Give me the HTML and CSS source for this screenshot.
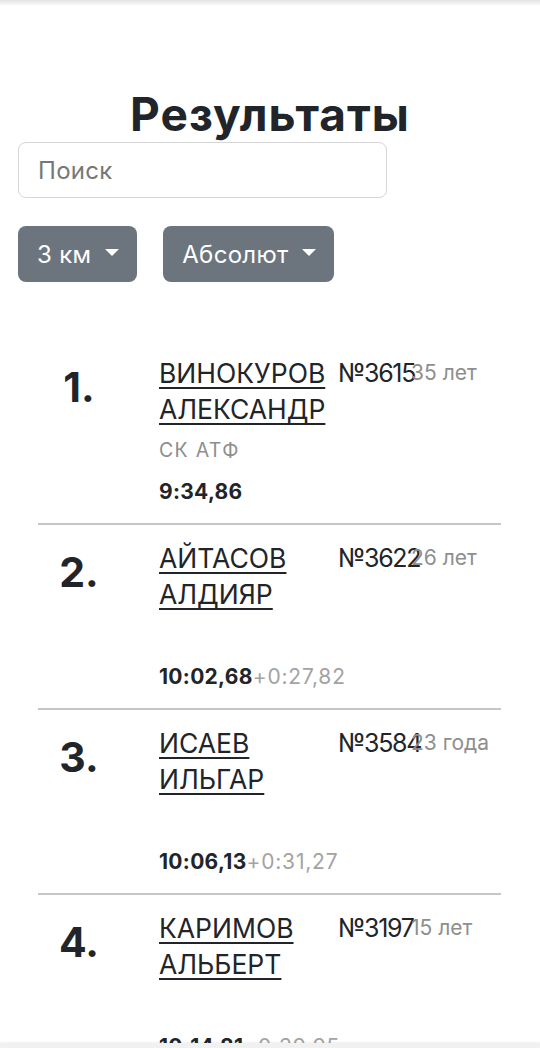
FILE: index.html
```html
<!DOCTYPE html>
<html lang="ru">
<head>
<meta charset="utf-8">
<title>Результаты</title>
<link rel="stylesheet" href="styles.css">
</head>
<body>
<div class="topbar"></div>
<main class="page">
  <h1 class="title">Результаты</h1>
  <input class="search" type="text" placeholder="Поиск">
  <div class="filters">
    <button class="dd" type="button">3 км</button>
    <button class="dd" type="button">Абсолют</button>
  </div>
  <ol class="results">
    <li class="result">
      <div class="place">1.</div>
      <a class="name" href="#">ВИНОКУРОВ АЛЕКСАНДР</a>
      <span class="bib">№3615</span>
      <span class="age">35 лет</span>
      <div class="club">СК АТФ</div>
      <div class="time"><b>9:34,86</b></div>
    </li>
    <li class="result">
      <div class="place">2.</div>
      <a class="name" href="#">АЙТАСОВ АЛДИЯР</a>
      <span class="bib">№3622</span>
      <span class="age">26 лет</span>
      <div class="club"></div>
      <div class="time"><b>10:02,68</b><span class="diff">+0:27,82</span></div>
    </li>
    <li class="result">
      <div class="place">3.</div>
      <a class="name" href="#">ИСАЕВ ИЛЬГАР</a>
      <span class="bib">№3584</span>
      <span class="age">23 года</span>
      <div class="club"></div>
      <div class="time"><b>10:06,13</b><span class="diff">+0:31,27</span></div>
    </li>
    <li class="result">
      <div class="place">4.</div>
      <a class="name" href="#">КАРИМОВ АЛЬБЕРТ</a>
      <span class="bib">№3197</span>
      <span class="age">15 лет</span>
      <div class="club"></div>
      <div class="time"><b>10:14,81</b><span class="diff">+0:39,95</span></div>
    </li>
  </ol>
</main>
<div class="bottombar"></div>
</body>
</html>
```
FILE: styles.css
```css
html, body {
  margin: 0;
  padding: 0;
  background: #fff;
}
body {
  font-family: Inter, "Noto Sans", sans-serif;
  color: #212529;
}
.topbar {
  position: fixed;
  top: 0;
  left: 0;
  right: 0;
  height: 6px;
  background: linear-gradient(#e3e3e3, #f3f3f3 60%, #fff);
  z-index: 5;
}
.bottombar {
  position: fixed;
  left: 0;
  right: 0;
  bottom: 0;
  height: 5px;
  background: #f1f1f1;
  box-shadow: 0 -1px 2px rgba(0,0,0,0.06);
  z-index: 5;
}
.page {
  padding: 88px 18px 0;
}
.title {
  margin: 0;
  font-size: 46px;
  line-height: 52px;
  font-weight: 700;
  text-align: center;
  letter-spacing: 1px;
}
.search {
  display: block;
  box-sizing: border-box;
  margin-top: 2px;
  width: 369px;
  height: 56px;
  padding: 0 19px;
  border: 1px solid #d6d6d6;
  border-radius: 8px;
  font-family: inherit;
  font-size: 24px;
  letter-spacing: 0.3px;
  color: #212529;
  outline: none;
}
.search::placeholder {
  color: #777;
}
.filters {
  display: flex;
  gap: 26px;
  margin-top: 28px;
}
.dd {
  display: flex;
  align-items: center;
  height: 56px;
  padding: 0 18px 0 19px;
  border: 0;
  border-radius: 8px;
  background: #6c757d;
  color: #fff;
  font-family: inherit;
  font-size: 24px;
  letter-spacing: 0.3px;
}
.dd::after {
  content: "";
  display: block;
  margin-left: 14px;
  margin-top: -3px;
  border-top: 7px solid #fff;
  border-left: 7px solid transparent;
  border-right: 7px solid transparent;
}
.results {
  list-style: none;
  margin: 58px 21px 0 20px;
  padding: 0;
}
.result {
  display: grid;
  grid-template-columns: 121px 179px 73px 1fr;
  grid-template-rows: auto auto auto;
  align-items: start;
  padding: 15px 0 12px;
  border-bottom: 2px solid #c6c6c6;
}
.place {
  grid-column: 1;
  grid-row: 1 / 3;
  width: 82px;
  margin-top: 7px;
  text-align: center;
  font-size: 41px;
  line-height: 50px;
  font-weight: 700;
}
.name {
  grid-column: 2;
  grid-row: 1;
  font-size: 26.5px;
  line-height: 36px;
  color: #212529;
  text-decoration: underline;
  text-decoration-thickness: 2px;
  text-underline-offset: 4px;
}
.bib {
  grid-column: 3;
  grid-row: 1;
  font-size: 25px;
  line-height: 36px;
  letter-spacing: -1.3px;
  white-space: nowrap;
}
.age {
  grid-column: 4;
  grid-row: 1;
  font-size: 21px;
  line-height: 36px;
  color: #8e8e8e;
  white-space: nowrap;
}
.club {
  grid-column: 2 / 5;
  grid-row: 2;
  height: 46px;
  font-size: 19.5px;
  line-height: 46px;
  letter-spacing: 1.3px;
  color: #8e8e8e;
}
.time {
  grid-column: 2 / 5;
  grid-row: 3;
  font-size: 21px;
  line-height: 38px;
  letter-spacing: 0.3px;
  white-space: nowrap;
}
.time b {
  font-weight: 700;
}
.diff {
  color: #a3a3a3;
  font-weight: 400;
  letter-spacing: 0.8px;
}
```
